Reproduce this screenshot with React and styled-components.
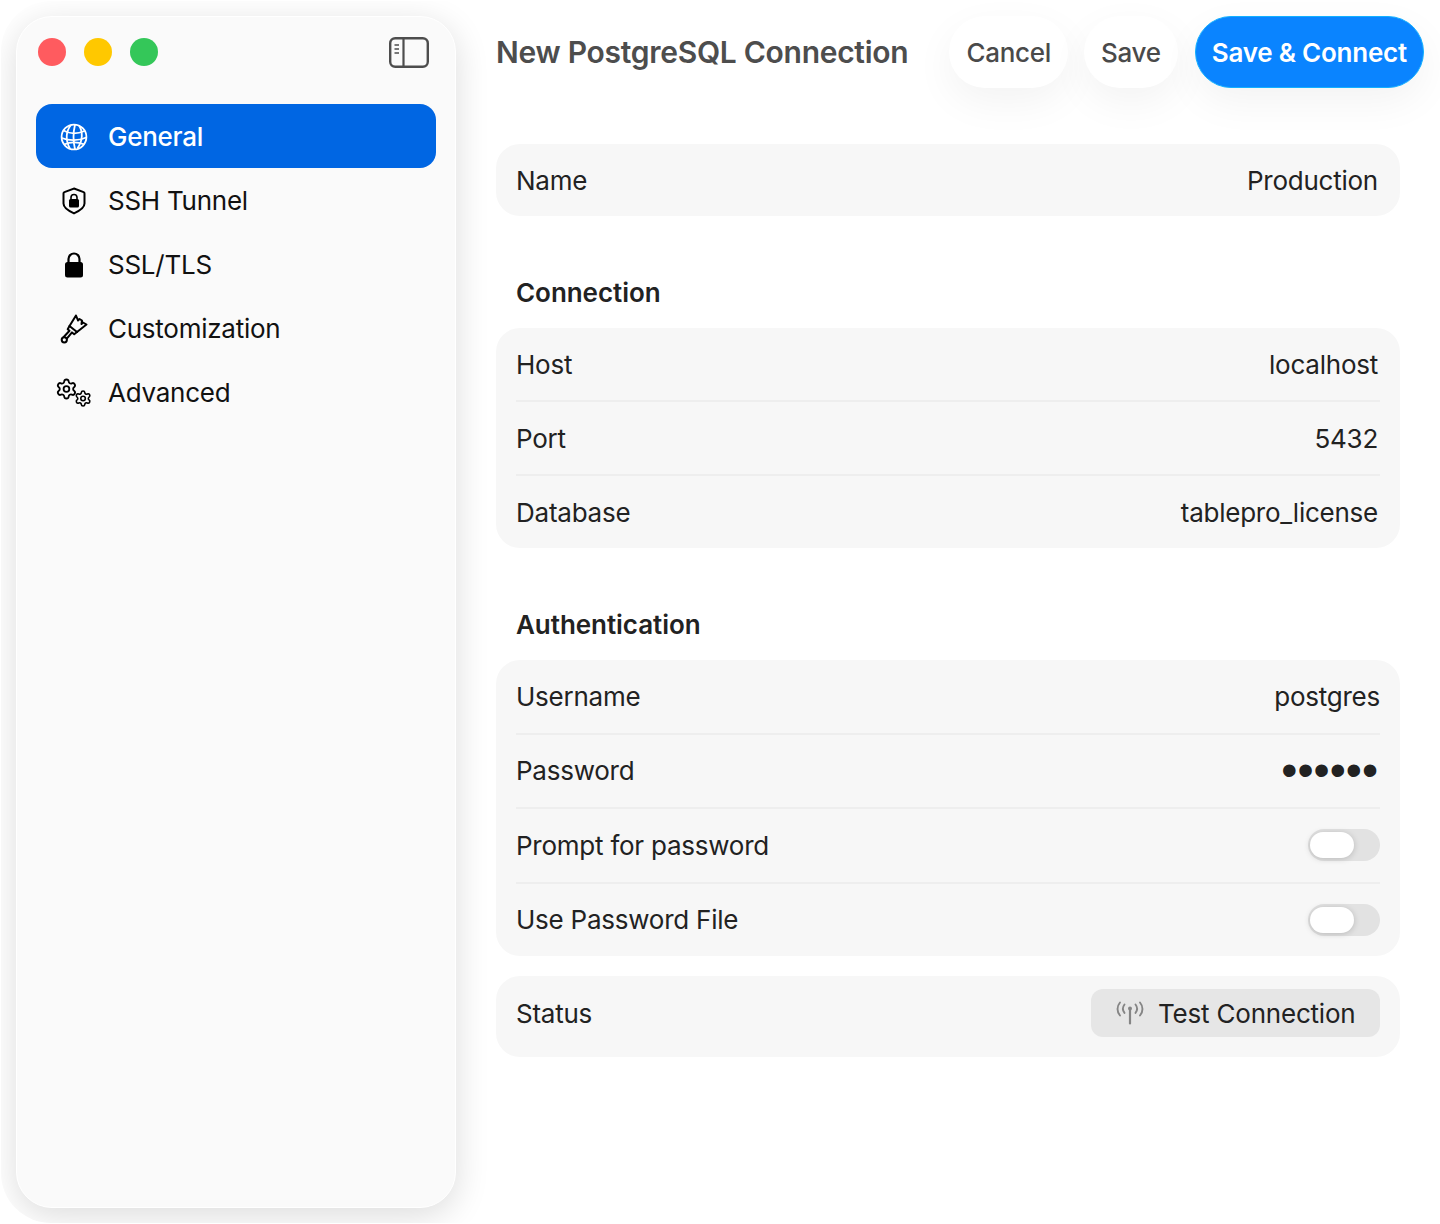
import React from "react";
import styled, { createGlobalStyle } from "styled-components";
import { Settings } from "lucide-react";

const GlobalStyle = createGlobalStyle`
  html, body {
    margin: 0;
    padding: 0;
    background: #fff;
    font-family: Inter, "Noto Sans", "Liberation Sans", sans-serif;
  }
  * { box-sizing: border-box; }
`;

const GlobeIcon = () => (
  <svg width="28" height="28" viewBox="0 0 28 28" fill="none" stroke="#fff" strokeWidth="1.8">
    <circle cx="14" cy="14" r="12.4" />
    <path d="M11 2c-5 6-6 15-1 23.600M19 2.600c4 6 4 15-1.500 22.600M15 1.700c-2 8-2 16 0 24.600" />
    <path d="M3.500 7.500c6 3.500 14 3.500 21 .5M1.800 15c7 3 17 3 24.400-.5M4 21.500c6-2.500 14-2.500 20.500 0" />
  </svg>
);

const ShieldIcon = () => (
  <svg width="24" height="28" viewBox="0 0 24 28" fill="none">
    <path d="M12 1.500l9.600 3.600c.6.2.9.7.9 1.300v10.200c0 3.700-3.200 6.600-10.500 9.700C4.700 23.200 1.500 20.300 1.500 16.600V6.400c0-.6.3-1.100.9-1.300z" stroke="#000" strokeWidth="2" />
    <rect x="7" y="12" width="10" height="8.500" rx="1.500" fill="#000" />
    <path d="M9 12.500V10.500a3 3 0 0 1 6 0v2" stroke="#000" strokeWidth="1.600" />
  </svg>
);

const LockIcon = () => (
  <svg width="20" height="26" viewBox="0 0 20 26" fill="none">
    <rect x="1" y="10" width="18" height="15.500" rx="2.500" fill="#000" />
    <path d="M4.500 11V7a5.500 5.500 0 0 1 11 0v4" stroke="#000" strokeWidth="2.200" />
  </svg>
);

const BrushIcon = () => (
  <svg width="28" height="30" viewBox="0 0 28 30" fill="none" stroke="#000" strokeWidth="2" strokeLinejoin="round" strokeLinecap="round">
    <path d="M16 1.500l-6.500 10.500 7.500 6 9.500-7.500-3.500-2-1.500 1.500.5-3.500-2.500-1.500-1.500 1.500z" />
    <path d="M9.500 12l-1.800 3.200 1.800 1.600-5.800 6.200" />
    <path d="M17 18l-2.800 2.200-2.200-1.800-5.200 6.300" />
    <circle cx="4.300" cy="25.800" r="2.600" />
  </svg>
);

const GearsIcon = () => (
  <GearsWrap>
    <Settings size={24} color="#000" strokeWidth={1.9} />
    <Settings size={19} color="#000" strokeWidth={2.1} />
  </GearsWrap>
);

const SidebarToggleIcon = () => (
  <svg width="40" height="31" viewBox="0 0 40 31" fill="none" stroke="#4d4d4d">
    <rect x="1.200" y="1.200" width="37.600" height="28.600" rx="5" strokeWidth="2.400" />
    <path d="M14.500 1.500v28" strokeWidth="2.200" />
    <path d="M5.500 8h4.500M5.500 12h4.500M5.500 16h4.500" strokeWidth="1.600" />
  </svg>
);

const AntennaIcon = () => (
  <svg width="28" height="24" viewBox="0 0 28 24" fill="none" stroke="#858585" strokeWidth="1.900" strokeLinecap="round">
    <path d="M14 9v13.500" strokeWidth="2.200" />
    <circle cx="14" cy="7.500" r="2" fill="#858585" stroke="none" />
    <path d="M8.500 3.500c-2 2.600-2 5.800 0 8.400M19.500 3.500c2 2.600 2 5.800 0 8.400" />
    <path d="M4 1.500c-3.300 3.800-3.300 9.200 0 13M24 1.500c3.300 3.800 3.300 9.200 0 13" />
  </svg>
);

const navItems = [
  { label: "General", icon: <GlobeIcon />, active: true },
  { label: "SSH Tunnel", icon: <ShieldIcon /> },
  { label: "SSL/TLS", icon: <LockIcon /> },
  { label: "Customization", icon: <BrushIcon /> },
  { label: "Advanced", icon: <GearsIcon /> },
];

const App = () => {
  return (
    <Page>
      <GlobalStyle />
      <Sidebar>
        <TitleBar>
          <Lights>
            <Light $color="#ff5b5f" />
            <Light $color="#ffc800" />
            <Light $color="#34c759" />
          </Lights>
          <SidebarToggleIcon />
        </TitleBar>
        <Nav>
          {navItems.map((item) => (
            <NavItem key={item.label} $active={item.active}>
              <NavIcon>{item.icon}</NavIcon>
              {item.label}
            </NavItem>
          ))}
        </Nav>
      </Sidebar>

      <Main>
        <Header>
          <Title>New PostgreSQL Connection</Title>
          <PillButton>Cancel</PillButton>
          <PillButton>Save</PillButton>
          <PrimaryButton>Save &amp; Connect</PrimaryButton>
        </Header>

        <Form>
          <Card $height={72}>
            <Row>
              <Label>Name</Label>
              <Value>Production</Value>
            </Row>
          </Card>

          <SectionTitle>Connection</SectionTitle>
          <Card $height={220}>
            <Row>
              <Label>Host</Label>
              <Value>localhost</Value>
            </Row>
            <Row>
              <Label>Port</Label>
              <Value>5432</Value>
            </Row>
            <Row>
              <Label>Database</Label>
              <Value>tablepro_license</Value>
            </Row>
          </Card>

          <SectionTitle>Authentication</SectionTitle>
          <Card $height={296}>
            <Row>
              <Label>Username</Label>
              <Value $flush>postgres</Value>
            </Row>
            <Row>
              <Label>Password</Label>
              <Dots>••••••</Dots>
            </Row>
            <Row>
              <Label>Prompt for password</Label>
              <Toggle>
                <Knob />
              </Toggle>
            </Row>
            <Row>
              <Label>Use Password File</Label>
              <Toggle>
                <Knob />
              </Toggle>
            </Row>
          </Card>

          <StatusCard>
            <Label>Status</Label>
            <TestButton>
              <AntennaIcon />
              Test Connection
            </TestButton>
          </StatusCard>
        </Form>
      </Main>
    </Page>
  );
};

export default App;

const Page = styled.div`
  display: flex;
  width: 1440px;
  height: 1224px;
  padding: 16px;
  background: #fff;
  overflow: hidden;
`;

const Sidebar = styled.aside`
  width: 440px;
  flex-shrink: 0;
  padding: 0 20px;
  background: #fafafa;
  border: 1px solid #fff;
  border-radius: 36px;
  box-shadow: 0 8px 34px rgba(0, 0, 0, 0.14);
  clip-path: inset(-15px -60px -15px -15px round 50px);
`;

const TitleBar = styled.div`
  display: flex;
  align-items: center;
  justify-content: space-between;
  height: 70px;
  padding: 0 6px 0 1px;
`;

const Lights = styled.div`
  display: flex;
  gap: 18px;
`;

const Light = styled.span`
  width: 28px;
  height: 28px;
  border-radius: 50%;
  background: ${(p) => p.$color};
`;

const Nav = styled.nav`
  margin-top: 17px;
  margin-left: -1px;
  margin-right: -1px;
`;

const NavItem = styled.div`
  display: flex;
  align-items: center;
  gap: 16px;
  height: 64px;
  padding: 1px 0 0 20px;
  border-radius: 16px;
  font-size: 26px;
  font-weight: ${(p) => (p.$active ? 500 : 400)};
  letter-spacing: -0.25px;
  color: ${(p) => (p.$active ? "#fff" : "#111")};
  background: ${(p) => (p.$active ? "#0066e3" : "transparent")};
`;

const NavIcon = styled.span`
  display: flex;
  align-items: center;
  justify-content: center;
  width: 36px;
`;

const GearsWrap = styled.span`
  display: flex;
  width: 36px;
  height: 30px;

  svg:first-child {
    margin-left: -1px;
    margin-top: -1px;
  }
  svg:last-child {
    margin-left: -4px;
    margin-top: 11px;
  }
`;

const Main = styled.main`
  flex: 1;
  min-width: 0;
  padding-left: 40px;
`;

const Header = styled.header`
  display: flex;
  align-items: center;
  gap: 16px;
  height: 72px;
`;

const Title = styled.h1`
  flex: 1;
  margin: 0;
  font-size: 30px;
  font-weight: 600;
  letter-spacing: -0.28px;
  color: #4d4d4d;
  white-space: nowrap;
`;

const PillButton = styled.button`
  height: 72px;
  padding: 0 17px;
  border: 0;
  border-radius: 36px;
  font-family: inherit;
  font-size: 26px;
  font-weight: 500;
  letter-spacing: -0.3px;
  color: #4a4a4a;
  background: #fff;
  box-shadow: 0 14px 40px rgba(0, 0, 0, 0.05);
`;

const PrimaryButton = styled(PillButton)`
  margin-left: 1px;
  padding: 0 16px;
  color: #fff;
  font-weight: 600;
  letter-spacing: -0.22px;
  background: #0a84ff;
  border: 1px solid #12b0ff;
`;

const Form = styled.div`
  width: 904px;
  margin-top: 56px;
`;

const SectionTitle = styled.h2`
  display: flex;
  align-items: center;
  height: 112px;
  margin: 0;
  padding: 40px 0 0 20px;
  font-size: 26px;
  font-weight: 600;
  letter-spacing: -0.05px;
  color: #222;
`;

const Card = styled.section`
  display: flex;
  flex-direction: column;
  height: ${(p) => p.$height}px;
  padding: 0 20px;
  background: #f7f7f7;
  border-radius: 24px;
`;

const Row = styled.div`
  flex: 1;
  display: flex;
  align-items: center;
  justify-content: space-between;
  border-bottom: 2px solid #eeeeee;

  &:last-child {
    border-bottom: 0;
  }
`;

const Label = styled.span`
  font-size: 26px;
  letter-spacing: -0.24px;
  color: #222;
`;

const Value = styled(Label)`
  padding-right: ${(p) => (p.$flush ? 0 : "2px")};
`;

const Dots = styled.span`
  padding: 0 2px 2px 0;
  font-family: "Liberation Sans", sans-serif;
  font-size: 46px;
  line-height: 1;
  color: #222;
`;

const Toggle = styled.span`
  display: flex;
  align-items: center;
  width: 72px;
  height: 32px;
  padding-left: 2px;
  background: #e2e2e2;
  border-radius: 16px;
`;

const Knob = styled.span`
  width: 44px;
  height: 26px;
  background: #fff;
  border-radius: 13px;
  box-shadow: 0 1px 6px rgba(0, 0, 0, 0.18);
`;

const StatusCard = styled(Card)`
  flex-direction: row;
  align-items: center;
  justify-content: space-between;
  height: 81px;
  margin-top: 20px;
  padding-bottom: 7px;
`;

const TestButton = styled.button`
  display: flex;
  align-items: center;
  gap: 14px;
  width: 289px;
  height: 48px;
  padding: 0 0 0 25px;
  border: 0;
  border-radius: 12px;
  font-family: inherit;
  font-size: 26px;
  letter-spacing: -0.2px;
  color: #222;
  background: #e6e6e6;
`;
